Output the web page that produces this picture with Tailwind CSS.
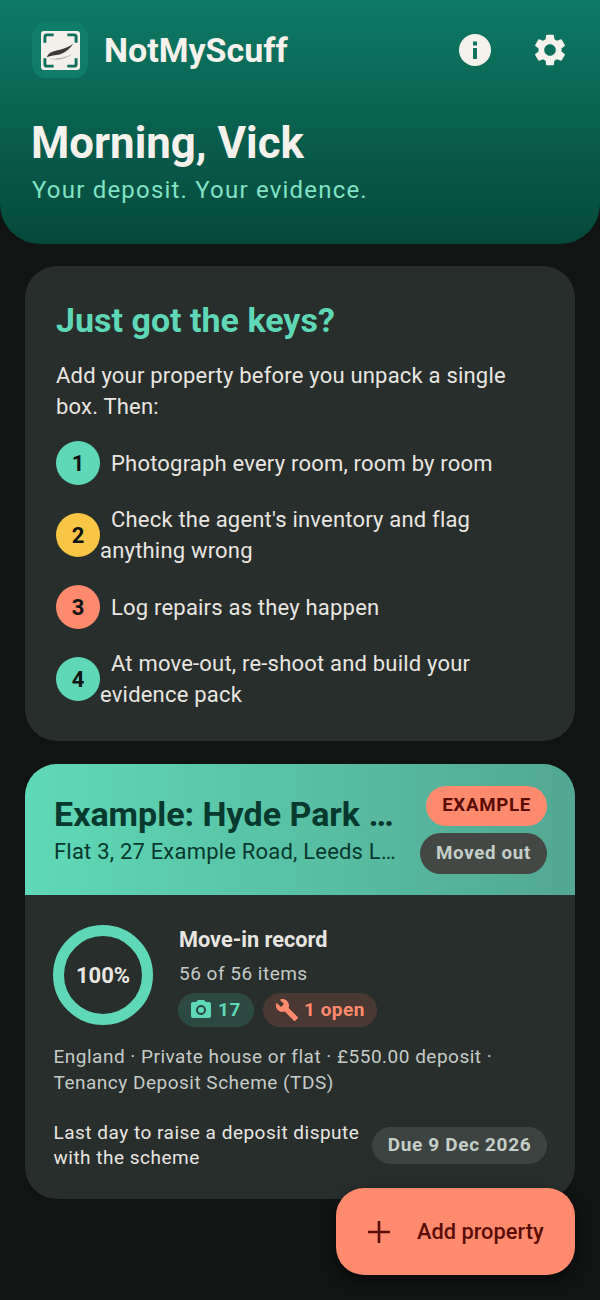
<!doctype html>
<html><head><meta charset="utf-8"><script src="https://cdn.jsdelivr.net/npm/@tailwindcss/browser@4"></script></head>
<body class="m-0 bg-[#101413] font-['Roboto',sans-serif]">
<div class="relative w-[600px] h-[1300px] overflow-hidden bg-[#101413] text-[#f5f1ec]">
  <header class="h-[244px] rounded-b-[40px] bg-gradient-to-b from-[#0f7b65] to-[#05483b] px-8 pt-[22px]">
    <div class="flex items-center h-14">
      <div class="w-14 h-14 rounded-[14px] bg-[#0f7d67] flex items-center justify-center">
        <svg width="39" height="39" viewBox="0 0 40 40"><rect width="40" height="40" rx="3" fill="#f3efea"/><path d="M4 12V6a2 2 0 0 1 2-2h7M27 4h7a2 2 0 0 1 2 2v6M36 28v6a2 2 0 0 1-2 2h-7M13 36H6a2 2 0 0 1-2-2v-6" fill="none" stroke="#0f6f5b" stroke-width="3"/><path d="M6 27c1-4 5-6 10-7 6-1.500 12-3 17-7-3 5-8 9-14 11-4 1-9 1-13 3z" fill="#3f3a38"/><path d="M8 28.500c8 0 17-1 24-5-6 5-16 7-24 5z" fill="#a9a5a1"/></svg>
      </div>
      <div class="ml-4 text-[34px] leading-10 font-bold">NotMyScuff</div>
      <div class="ml-auto flex items-center gap-[43px] pr-[2px]">
        <svg width="32" height="32" viewBox="0 0 32 32"><circle cx="16" cy="16" r="16" fill="#f5f1ec"/><rect x="14" y="14" width="4" height="11" fill="#0f7360"/><rect x="14" y="7.5" width="4" height="4" fill="#0f7360"/></svg>
        <svg width="32" height="32" viewBox="2 2 20 20" fill="#f5f1ec"><path d="M19.14 12.94c.04-.3.06-.61.06-.94 0-.32-.02-.64-.07-.94l2.03-1.58a.49.49 0 0 0 .12-.61l-1.92-3.32a.488.488 0 0 0-.59-.22l-2.39.96c-.5-.38-1.03-.7-1.62-.94l-.36-2.54a.484.484 0 0 0-.48-.41h-3.84c-.24 0-.43.17-.47.41l-.36 2.54c-.59.24-1.13.57-1.62.94l-2.39-.96c-.22-.08-.47 0-.59.22L2.74 8.87c-.12.21-.08.47.12.61l2.03 1.58c-.05.3-.09.63-.09.94s.02.64.07.94l-2.03 1.58a.49.49 0 0 0-.12.61l1.92 3.32c.12.22.37.29.59.22l2.39-.96c.5.38 1.03.7 1.62.94l.36 2.54c.05.24.24.41.48.41h3.84c.24 0 .44-.17.47-.41l.36-2.54c.59-.24 1.13-.56 1.62-.94l2.39.96c.22.08.47 0 .59-.22l1.92-3.32c.12-.22.07-.47-.12-.61l-2.01-1.58zM12 15.6c-1.98 0-3.6-1.62-3.6-3.6s1.62-3.6 3.6-3.6 3.6 1.62 3.6 3.6-1.62 3.6-3.6 3.6z"/></svg>
      </div>
    </div>
    <h1 class="mt-[39px] -ml-px text-[43.800px] leading-[52px] font-bold">Morning, Vick</h1>
    <p class="mt-[5px] text-[24px] leading-[32px] tracking-[1.2px] text-[#7fe3c4]">Your deposit. Your evidence.</p>
  </header>

  <section class="mx-[25px] mt-[22px] h-[475px] rounded-[32px] bg-[#282e2c] px-[31px] pt-[32px]">
    <h2 class="text-[34px] leading-[44px] font-bold text-[#5fd8b7]">Just got the keys?</h2>
    <p class="mt-[18px] text-[22px] leading-[31px] tracking-[0.2px] text-[#e9e6e1]">Add your property before you unpack a single box. Then:</p>
    <ol class="mt-[19px] flex flex-col gap-[19px] text-[22px] leading-[31px] tracking-[0.2px] text-[#e9e6e1]">
      <li class="flex items-center"><span class="flex w-11 h-11 shrink-0 rounded-full bg-[#5fd8b7] text-[#101413] items-center justify-center font-bold tracking-normal">1</span><span class="indent-[11px]">Photograph every room, room by room</span></li>
      <li class="flex items-center"><span class="flex w-11 h-11 shrink-0 rounded-full bg-[#f8c544] text-[#101413] items-center justify-center font-bold tracking-normal">2</span><span class="indent-[11px]">Check the agent's inventory and flag anything wrong</span></li>
      <li class="flex items-center"><span class="flex w-11 h-11 shrink-0 rounded-full bg-[#ff8a6e] text-[#101413] items-center justify-center font-bold tracking-normal">3</span><span class="indent-[11px]">Log repairs as they happen</span></li>
      <li class="flex items-center"><span class="flex w-11 h-11 shrink-0 rounded-full bg-[#5fd8b7] text-[#101413] items-center justify-center font-bold tracking-normal">4</span><span class="indent-[11px]">At move-out, re-shoot and build your evidence pack</span></li>
    </ol>
  </section>

  <section class="mx-[25px] mt-[23px] h-[435px] rounded-[32px] bg-[#282e2c] overflow-hidden">
    <div class="h-[131px] bg-gradient-to-r from-[#5fd9b7] to-[#52a892] pl-[29px] pr-7 flex items-center gap-[22px]">
      <div class="min-w-0 flex-1 text-[#07392e]">
        <div class="text-[34px] leading-[40px] font-bold truncate">Example: Hyde Park Flat</div>
        <div class="mt-1 text-[22px] leading-[28px] tracking-[0.2px] truncate">Flat 3, 27 Example Road, Leeds LS6 1AB</div>
      </div>
      <div class="flex flex-col items-end gap-[7px] shrink-0">
        <span class="h-[40px] px-4 rounded-full bg-[#ff8a6e] text-[#5b0c04] text-[18.700px] font-bold tracking-[0.7px] flex items-center">EXAMPLE</span>
        <span class="h-[41px] px-4 rounded-full bg-[#434845] text-[#c5cfc9] text-[18.700px] font-bold tracking-[0.7px] flex items-center pt-px">Moved out</span>
      </div>
    </div>
    <div class="px-7 pt-[30px]">
      <div class="flex">
        <div class="w-[100px] h-[100px] rounded-full border-[11px] border-[#5fd8b7] flex items-center justify-center text-[22px] font-bold text-[#e9e6e1] shrink-0">100%</div>
        <div class="ml-[26px]">
          <div class="pt-px text-[21.700px] leading-7 font-bold text-[#e9e6e1]">Move-in record</div>
          <div class="mt-2 text-[19px] leading-6 tracking-[0.5px] text-[#c5cbc7]">56 of 56 items</div>
          <div class="mt-[7px] flex gap-[9px]">
            <span class="h-[34px] w-[76px] -ml-px rounded-full bg-[#2c4a42] text-[#5fd8b7] flex items-center justify-center gap-[7px] text-[19px] font-bold tracking-[0.5px]">
              <svg width="20" height="20" viewBox="2 2 20 20" fill="#5fd8b7"><path d="M9 2 7.17 4H4c-1.1 0-2 .9-2 2v12c0 1.1.9 2 2 2h16c1.1 0 2-.9 2-2V6c0-1.1-.9-2-2-2h-3.17L15 2H9zm3 15c-2.76 0-5-2.24-5-5s2.24-5 5-5 5 2.24 5 5-2.24 5-5 5zm0-2a3 3 0 1 0 0-6 3 3 0 0 0 0 6z"/></svg>17</span>
            <span class="h-[34px] w-[114px] rounded-full bg-[#4a3833] text-[#ff8a6e] flex items-center justify-center gap-[5px] text-[19px] font-bold tracking-[0.5px]">
              <svg width="24" height="24" viewBox="0 0 24 24" fill="#ff8a6e"><path d="M22.7 19l-9.1-9.1c.9-2.3.4-5-1.5-6.9-2-2-5-2.4-7.400-1.300L9 6 6 9 1.600 4.700C.4 7.100.9 10.100 2.900 12.100c1.900 1.900 4.600 2.400 6.900 1.500l9.100 9.100c.4.400 1 .4 1.400 0l2.300-2.300c.5-.4.500-1.100.100-1.400z"/></svg>1 open</span>
          </div>
        </div>
      </div>
      <p class="mt-[17px] pl-[0.5px] text-[19px] leading-[25.500px] tracking-[0.5px] text-[#c5cbc7]">England · Private house or flat · £550.00 deposit · Tenancy Deposit Scheme (TDS)</p>
      <div class="mt-[25px] flex items-center justify-between">
        <p class="w-[310px] pl-[0.5px] text-[19px] leading-[25px] tracking-[0.5px] text-[#e9e6e1]">Last day to raise a deposit dispute with the scheme</p>
        <span class="h-[37px] w-[175px] rounded-full bg-[#3d4341] text-[#c5cfc9] text-[19px] font-bold tracking-[0.65px] flex items-center justify-center">Due 9 Dec 2026</span>
      </div>
    </div>
  </section>

  <button class="absolute left-[336px] top-[1188px] w-[239px] h-[87px] rounded-[28px] bg-[#ff8a6e] text-[#5b0c04] flex items-center shadow-[0_6px_14px_rgba(0,0,0,0.45)]">
    <svg class="ml-[31px]" width="24" height="24" viewBox="0 0 24 24" fill="none" stroke="#5b0c04" stroke-width="2.600"><path d="M12 1v22M1 12h22"/></svg>
    <span class="ml-[26px] pt-px text-[21.800px] font-medium">Add property</span>
  </button>
</div>
</body></html>
